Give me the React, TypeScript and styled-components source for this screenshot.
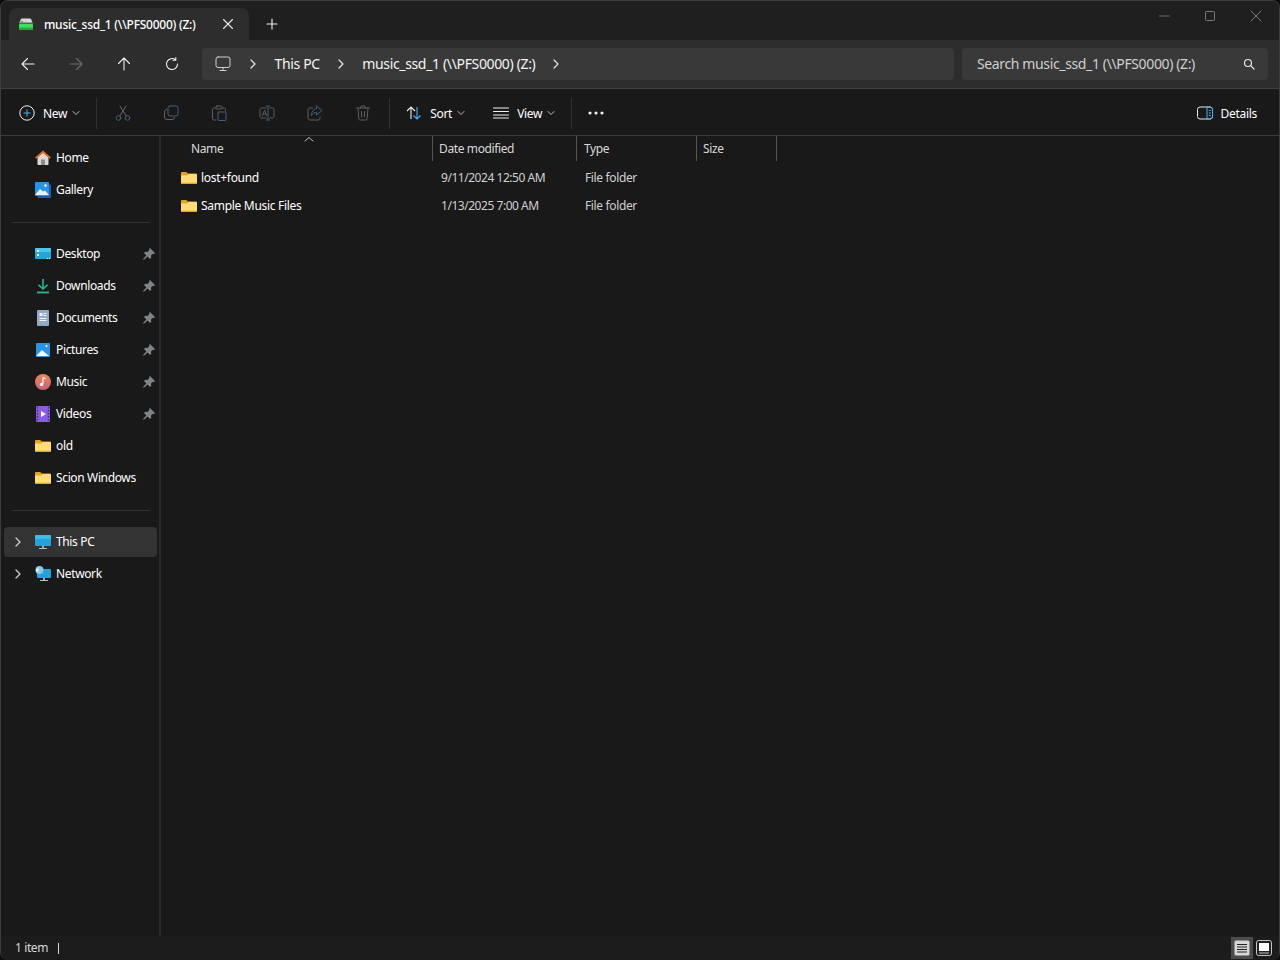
import * as React from "react";
import styled, { createGlobalStyle } from "styled-components";

const GlobalStyle = createGlobalStyle`
  html, body {
    margin: 0;
    padding: 0;
    height: 100%;
    background: #0c0c0c;
  }
  #root {
    height: 100%;
  }
`;

const Win = styled.div`
  box-sizing: border-box;
  width: 1280px;
  height: 960px;
  display: flex;
  flex-direction: column;
  overflow: hidden;
  border: 1px solid #3c3c3c;
  border-bottom: 0;
  border-radius: 8px;
  background: #191919;
  color: #fff;
  font-family: "Noto Sans", "Open Sans", sans-serif;
  font-size: 12px;
`;

const TabStrip = styled.div`
  height: 39px;
  flex-shrink: 0;
  display: flex;
  align-items: flex-end;
  padding-left: 8px;
  background: #1f1f1f;
`;

const Tab = styled.div`
  box-sizing: border-box;
  width: 240px;
  height: 32px;
  display: flex;
  align-items: center;
  padding: 0 15px 0 9px;
  background: #2d2d2d;
  border-radius: 8px 8px 0 0;
`;

const TabTitle = styled.span`
  flex: 1;
  margin-left: 10px;
  font-size: 12px;
  font-weight: 500;
  letter-spacing: -0.25px;
  white-space: nowrap;
`;

const NewTab = styled.div`
  width: 46px;
  height: 32px;
  display: flex;
  align-items: center;
  justify-content: center;
`;

const Spring = styled.div`
  flex: 1;
`;

const Caption = styled.div`
  align-self: flex-start;
  width: 46px;
  height: 29px;
  display: flex;
  align-items: center;
  justify-content: center;
`;

const NavBar = styled.div`
  box-sizing: border-box;
  height: 49px;
  flex-shrink: 0;
  display: flex;
  align-items: center;
  padding: 0 11px 0 3px;
  background: #2d2d2d;
  border-bottom: 1px solid #3f3f3f;
`;

const NavButton = styled.div`
  width: 48px;
  height: 32px;
  display: flex;
  align-items: center;
  justify-content: center;
`;

const AddressBar = styled.div`
  flex: 1;
  height: 32px;
  margin-left: 6px;
  display: flex;
  align-items: center;
  padding-left: 13px;
  background: #393939;
  border-radius: 4px;
  font-size: 14px;
  letter-spacing: -0.35px;
  color: #f4f4f4;
`;

const Crumb = styled.span`
  white-space: nowrap;
  margin: 0 15px 0 15.5px;
  padding-bottom: 2px;
`;

const ChevronSlot = styled.span<{ $left: number }>`
  display: flex;
  margin-left: ${(p) => p.$left}px;
`;

const SearchBox = styled.div`
  box-sizing: border-box;
  width: 306px;
  height: 32px;
  margin-left: 8px;
  display: flex;
  align-items: center;
  justify-content: space-between;
  padding: 0 13px 0 15px;
  background: #393939;
  border-radius: 4px;
  font-size: 14px;
  letter-spacing: -0.37px;
  color: #cfcfcf;
  white-space: nowrap;
`;

const SearchText = styled.span`
  padding-bottom: 2px;
`;

const Toolbar = styled.div`
  box-sizing: border-box;
  height: 47px;
  flex-shrink: 0;
  display: flex;
  align-items: center;
  padding: 2px 0 0 18px;
  background: #191919;
  border-bottom: 1px solid #3a3a3a;
`;

const ToolText = styled.span`
  margin: 0 5px 0 8px;
  font-size: 12px;
  letter-spacing: -0.3px;
`;

const ToolGroup = styled.div`
  display: flex;
  align-items: center;
`;

const GroupGap = styled.div`
  width: 28px;
`;

const ToolSep = styled.div<{ $left: number; $right: number }>`
  width: 1px;
  height: 31px;
  margin: 0 ${(p) => p.$right}px 0 ${(p) => p.$left}px;
  background: #303030;
`;

const IconCell = styled.div`
  width: 48px;
  display: flex;
  justify-content: center;
`;

const Details = styled.div`
  display: flex;
  align-items: center;
  margin-right: 22px;
  font-size: 12px;
  letter-spacing: -0.3px;
  span {
    margin-left: 8px;
  }
`;

const Body = styled.div`
  flex: 1;
  min-height: 0;
  display: flex;
`;

const Sidebar = styled.nav`
  box-sizing: border-box;
  width: 158px;
  flex-shrink: 0;
  display: flex;
  flex-direction: column;
  padding: 6px 0 0 3px;
`;

const SideRow = styled.div<{ $active?: boolean }>`
  box-sizing: border-box;
  width: 153px;
  height: 30px;
  margin: 1px 0;
  display: flex;
  align-items: center;
  padding-left: 6px;
  border-radius: 4px;
  background: ${(p) => (p.$active ? "#333333" : "transparent")};
  letter-spacing: -0.36px;
  color: #fff;
`;

const Expander = styled.span`
  width: 25px;
  flex-shrink: 0;
  display: flex;
  padding-left: 2px;
  box-sizing: border-box;
`;

const SideIcon = styled.span`
  width: 16px;
  height: 16px;
  flex-shrink: 0;
  display: flex;
  margin-right: 5px;
`;

const SideLabel = styled.span`
  flex: 1;
  padding-bottom: 2px;
  white-space: nowrap;
`;

const PinSlot = styled.span`
  display: flex;
  margin-right: 2px;
`;

const SideDivider = styled.div`
  width: 138px;
  height: 1px;
  flex-shrink: 0;
  margin: 16px 0 15px 8px;
  background: #333333;
`;

const Splitter = styled.div`
  width: 2px;
  flex-shrink: 0;
  background: #2b2b2b;
`;

const Content = styled.main`
  flex: 1;
  min-width: 0;
`;

const HeaderRow = styled.div`
  position: relative;
  display: grid;
  grid-template-columns: 272px 144px 120px 80px;
  height: 25px;
  margin-bottom: 3px;
  color: #d8d8d8;
`;

const HeaderCell = styled.div<{ $pad: number }>`
  box-sizing: border-box;
  height: 25px;
  line-height: 25px;
  padding-left: ${(p) => p.$pad}px;
  border-right: 1px solid #555;
  letter-spacing: -0.38px;
`;

const SortCaret = styled.span`
  position: absolute;
  left: 143px;
  top: 0;
  display: flex;
`;

const FileRow = styled.div`
  display: grid;
  grid-template-columns: 272px 144px 120px 80px;
  height: 28px;
  align-items: center;
`;

const NameCell = styled.div`
  display: flex;
  align-items: center;
  padding-left: 20px;
  letter-spacing: -0.3px;
  white-space: nowrap;
  svg {
    margin-right: 4px;
  }
  span {
    padding-bottom: 2px;
  }
`;

const InfoCell = styled.div<{ $spacing: number }>`
  padding: 0 0 2px 8px;
  color: #d0d0d0;
  letter-spacing: ${(p) => p.$spacing}px;
  white-space: nowrap;
`;

const StatusBar = styled.div`
  height: 24px;
  flex-shrink: 0;
  display: flex;
  align-items: center;
  padding-left: 14px;
  background: #1c1c1c;
  color: #d8d8d8;
  letter-spacing: -0.4px;
`;

const StatusText = styled.span`
  padding-bottom: 2px;
`;

const StatusSep = styled.div`
  width: 1px;
  height: 11px;
  margin-left: 10px;
  background: #d8d8d8;
`;

const ViewToggle = styled.div<{ $on?: boolean }>`
  width: 22px;
  height: 22px;
  display: flex;
  align-items: center;
  justify-content: center;
  background: ${(p) => (p.$on ? "#4b4b4b" : "transparent")};
`;

const ViewToggles = styled.div`
  display: flex;
  align-items: center;
  margin-right: 4px;
`;

type SvgProps = React.SVGProps<SVGSVGElement>;

const Line = ({ children, size = 16, ...rest }: SvgProps & { size?: number }) => (
  <svg width={size} height={size} viewBox="0 0 16 16" fill="none" stroke="currentColor" strokeLinecap="round" strokeLinejoin="round" {...rest}>
    {children}
  </svg>
);

const Chevron = ({ color = "#e0e0e0" }: { color?: string }) => (
  <Line stroke={color} strokeWidth={1.3} size={12} viewBox="0 0 12 12">
    <path d="M4 2l4 4-4 4" />
  </Line>
);

const Down = () => (
  <Line stroke="#bdbdbd" strokeWidth={1} size={8} viewBox="0 0 8 8">
    <path d="M1 2.500l3 3 3-3" />
  </Line>
);

const DriveIcon = () => (
  <svg width="16" height="16" viewBox="0 0 16 16">
    <path d="M4 2.500h8c.6 0 1 .3 1.200.8L15 8H1l1.800-4.700c.2-.5.600-.8 1.200-.8z" fill="#d8d8d8" />
    <path d="M1.500 6.500h13L15 8H1z" fill="#5c5c5c" />
    <rect x="1" y="8" width="14" height="6" rx="1" fill="#45dc60" />
    <rect x="1" y="11.500" width="14" height="2.500" rx="1" fill="#23a83d" />
    <rect x="3" y="5" width="2" height="1" fill="#2fb34a" />
  </svg>
);

const FolderIcon = () => (
  <svg width="16" height="16" viewBox="0 0 16 16">
    <path d="M0 3.200C0 2.500.5 2 1.200 2h4l1.600 1.500h8c.7 0 1.200.5 1.200 1.200v1H0z" fill="#e8a317" />
    <path d="M0 5.200h6.200l1.600-1.200h7c.7 0 1.200.5 1.200 1.200v7.600c0 .7-.5 1.200-1.200 1.200H1.200C.5 14 0 13.500 0 12.800z" fill="#ffdc78" />
    <path d="M0 12.800h16c0 .7-.5 1.200-1.200 1.200H1.200C.5 14 0 13.500 0 12.800z" fill="#e8a317" />
  </svg>
);

const PinIcon = () => (
  <svg width="12" height="12" viewBox="0 0 12 12">
    <path d="M7 0l5 5-1.100 1-1-.3-1.900 1.900.2 2.200L7 11 4.500 8.500 1 11.800 0 11l3.400-3.500L1 5l1.200-1.200 2.200.2L6.300 2.100 6 1z" fill="#7f8488" />
  </svg>
);

const HomeIcon = () => (
  <svg width="16" height="16" viewBox="0 0 16 16">
    <path d="M2.500 7L8 2.500 13.500 7v7.300c0 .5-.3.700-.7.700H3.200c-.4 0-.7-.2-.7-.7z" fill="#dcd8d5" />
    <rect x="6" y="9.500" width="4" height="5.500" fill="#8f8a87" />
    <path d="M8 .5L0 7.500l1.200 1.300L8 2.900l6.800 5.900L16 7.500z" fill="#e0691d" />
  </svg>
);

const GalleryIcon = () => (
  <svg width="16" height="16" viewBox="0 0 16 16">
    <rect x="2.500" y="2.500" width="13.500" height="13.500" rx="1" fill="#1a5fb0" />
    <rect x="0" y="0" width="14" height="14" rx="1" fill="#2a93e4" />
    <path d="M0 13l5-6 3 2.500 2-1 4 4.500z" fill="#eaf4fc" />
    <circle cx="10.500" cy="3.500" r="1.200" fill="#fff" />
  </svg>
);

const DesktopIcon = () => (
  <svg width="16" height="16" viewBox="0 0 16 16">
    <rect x="0" y="2" width="16" height="11" rx="1" fill="#25a5dc" />
    <rect x="0" y="2" width="16" height="4" rx="1" fill="#4cc6ef" />
    <rect x="2" y="4" width="2" height="2" fill="#eaf8fd" />
    <rect x="2" y="8" width="2" height="2" fill="#eaf8fd" />
    <rect x="12" y="12" width="1" height="1" fill="#eaf8fd" />
    <rect x="14" y="12" width="1" height="1" fill="#eaf8fd" />
  </svg>
);

const DownloadIcon = () => (
  <svg width="16" height="16" viewBox="0 0 16 16" fill="none" stroke="#25b890" strokeWidth="1.600">
    <path d="M8 1v10M3.500 6.800L8 11l4.500-4.200" />
    <path d="M2 14.500h12" strokeWidth="1.800" />
  </svg>
);

const DocumentIcon = () => (
  <svg width="16" height="16" viewBox="0 0 16 16">
    <rect x="2" y="0" width="12" height="16" rx="1" fill="#92a8c4" />
    <rect x="4.500" y="3" width="3" height="3" fill="#f2f5f9" />
    <path d="M8.500 3.500h3M8.500 5.500h3M4.500 8.500h7M4.500 10.500h7" stroke="#f2f5f9" strokeWidth="1" fill="none" />
  </svg>
);

const PicturesIcon = () => (
  <svg width="16" height="16" viewBox="0 0 16 16">
    <rect x="1" y="1" width="14" height="14" rx="1" fill="#2a93e4" />
    <path d="M1 14l6-6 7 6z" fill="#f0f7fc" />
    <circle cx="11.500" cy="4" r="1" fill="#fff" />
  </svg>
);

const MusicIcon = () => (
  <svg width="16" height="16" viewBox="0 0 16 16">
    <defs>
      <linearGradient id="mus" x1="0" y1="0" x2="0" y2="1">
        <stop offset="0" stopColor="#e88a55" />
        <stop offset="1" stopColor="#c9607a" />
      </linearGradient>
    </defs>
    <circle cx="8" cy="8" r="8" fill="url(#mus)" />
    <path d="M8 3.500v6.300" stroke="#fff" strokeWidth="1.200" />
    <path d="M8 3.500l2.500 1.200" stroke="#fff" strokeWidth="1.200" />
    <circle cx="6.500" cy="10.500" r="1.700" fill="#fff" />
  </svg>
);

const VideoIcon = () => (
  <svg width="16" height="16" viewBox="0 0 16 16">
    <rect x="1" y="0" width="14" height="16" rx="1" fill="#8a5ce0" />
    <path d="M2.500 1v14M13.500 1v14" stroke="#3f2a80" strokeWidth="1.400" strokeDasharray="1.500 1.500" />
    <path d="M6 5l5 3-5 3z" fill="#fff" />
  </svg>
);

const ThisPcIcon = () => (
  <svg width="16" height="16" viewBox="0 0 16 16">
    <rect x="0" y="1" width="16" height="11" rx="1" fill="#22a3dc" />
    <rect x="0" y="1" width="16" height="4" rx="1" fill="#38bfe8" />
    <rect x="7" y="12" width="2" height="2" fill="#a8a8a8" />
    <rect x="4" y="14" width="8" height="1" fill="#bdbdbd" />
  </svg>
);

const NetworkIcon = () => (
  <svg width="16" height="16" viewBox="0 0 16 16">
    <rect x="2" y="3" width="14" height="9" rx="1" fill="#22a3dc" />
    <rect x="8" y="12" width="2" height="2" fill="#a8a8a8" />
    <rect x="5" y="14" width="8" height="1" fill="#bdbdbd" />
    <circle cx="4.500" cy="4" r="4" fill="#8fc7ec" />
    <path d="M1 3c2-1 3 0 3 1s-2 1-2 3z" fill="#e4f2fb" />
  </svg>
);

const muted = { stroke: "#3d6178", strokeWidth: 1 };
const dim = { stroke: "#5f5f5f", strokeWidth: 1 };

const quickItems = [
  { label: "Desktop", icon: <DesktopIcon />, pin: true },
  { label: "Downloads", icon: <DownloadIcon />, pin: true },
  { label: "Documents", icon: <DocumentIcon />, pin: true },
  { label: "Pictures", icon: <PicturesIcon />, pin: true },
  { label: "Music", icon: <MusicIcon />, pin: true },
  { label: "Videos", icon: <VideoIcon />, pin: true },
  { label: "old", icon: <FolderIcon /> },
  { label: "Scion Windows", icon: <FolderIcon /> },
];

const files = [
  { name: "lost+found", date: "9/11/2024 12:50 AM" },
  { name: "Sample Music Files", date: "1/13/2025 7:00 AM" },
];

export default function App() {
  return (
    <>
      <GlobalStyle />
      <Win>
        <TabStrip>
          <Tab>
            <DriveIcon />
            <TabTitle>music_ssd_1 (\\PFS0000) (Z:)</TabTitle>
            <Line stroke="#e8e8e8" strokeWidth={1.1} size={12} viewBox="0 0 12 12">
              <path d="M1.500 1.500l9 9M10.500 1.500l-9 9" />
            </Line>
          </Tab>
          <NewTab>
            <Line stroke="#f0f0f0" strokeWidth={1.1} size={12} viewBox="0 0 12 12">
              <path d="M6 1v10M1 6h10" />
            </Line>
          </NewTab>
          <Spring />
          <Caption>
            <Line stroke="#6a6a6a" size={12} viewBox="0 0 12 12"><path d="M1.500 6h10" /></Line>
          </Caption>
          <Caption>
            <Line stroke="#7a7a7a" size={12} viewBox="0 0 12 12"><rect x="1.500" y="1.500" width="9" height="9" rx="1" /></Line>
          </Caption>
          <Caption>
            <Line stroke="#7a7a7a" size={12} viewBox="0 0 12 12"><path d="M1 1l10 10M11 1L1 11" /></Line>
          </Caption>
        </TabStrip>

        <NavBar>
          <NavButton>
            <Line stroke="#f0f0f0" strokeWidth={1.1}><path d="M14 8H2M7.500 2.500L2 8l5.500 5.500" /></Line>
          </NavButton>
          <NavButton>
            <Line stroke="#6e6e6e" strokeWidth={1.1}><path d="M2 8h12M8.500 2.500L14 8l-5.500 5.500" /></Line>
          </NavButton>
          <NavButton>
            <Line stroke="#f0f0f0" strokeWidth={1.1}><path d="M8 14V2M2.500 7.500L8 2l5.500 5.500" /></Line>
          </NavButton>
          <NavButton>
            <Line stroke="#f0f0f0" strokeWidth={1.1}><path d="M13.500 8A5.500 5.500 0 1 1 11.500 3.800M11.800 1.500v2.800H9" /></Line>
          </NavButton>
          <AddressBar>
            <Line stroke="#cfcfcf" strokeWidth={1}>
              <rect x="1" y="1" width="14" height="10.500" rx="2" />
              <path d="M8 11.500V14M5 14.500h6" />
            </Line>
            <ChevronSlot $left={16}><Chevron /></ChevronSlot>
            <Crumb>This PC</Crumb>
            <Chevron />
            <Crumb>music_ssd_1 (\\PFS0000) (Z:)</Crumb>
            <Chevron />
          </AddressBar>
          <SearchBox>
            <SearchText>Search music_ssd_1 (\\PFS0000) (Z:)</SearchText>
            <Line stroke="#e8e8e8" strokeWidth={1.2} size={12} viewBox="0 0 12 12">
              <circle cx="5" cy="5" r="3.500" />
              <path d="M7.700 7.700L11 11" />
            </Line>
          </SearchBox>
        </NavBar>

        <Toolbar>
          <ToolGroup>
            <svg width="16" height="16" viewBox="0 0 16 16" fill="none">
              <circle cx="8" cy="8" r="7.200" stroke="#f0f0f0" />
              <path d="M8 4.500v7M4.500 8h7" stroke="#3fb4f0" />
            </svg>
            <ToolText>New</ToolText>
            <Down />
          </ToolGroup>
          <ToolSep $left={16} $right={2} />
          <IconCell>
            <Line {...muted}>
              <circle cx="3.500" cy="13" r="2.300" /><circle cx="12.500" cy="13" r="2.300" />
              <path d="M4.800 11L11 1M11.200 11L5 1" stroke="#6a6a6a" />
            </Line>
          </IconCell>
          <IconCell>
            <Line {...dim}>
              <rect x="5" y="1" width="10" height="10" rx="2" stroke="#3d6178" />
              <path d="M4 4.500C2 4.500 1.500 5.500 1.500 7v5c0 1.500 1 2.500 2.500 2.500h5c1.500 0 2.500-.5 2.500-2" />
            </Line>
          </IconCell>
          <IconCell>
            <Line {...dim}>
              <path d="M5 3H3c-1 0-1.500.5-1.500 1.500v9c0 1 .5 1.500 1.500 1.500h2M11 3h2c1 0 1.500.5 1.500 1.500V6" />
              <rect x="5" y="1" width="6" height="3" rx="1" />
              <rect x="7" y="7" width="8" height="8.500" rx="1" stroke="#3d6178" />
            </Line>
          </IconCell>
          <IconCell>
            <Line {...dim}>
              <path d="M7 3H2.500C1.500 3 1 3.500 1 4.500v7c0 1 .5 1.500 1.500 1.500H7M11 3h2.500c1 0 1.500.5 1.500 1.500v7c0 1-.5 1.500-1.500 1.500H11" />
              <path d="M9 1v14M7.500 1h3M7.500 15h3" stroke="#3d6178" />
              <path d="M3.500 10.500L5.500 5l2 5.500M4.300 9h2.400" />
            </Line>
          </IconCell>
          <IconCell>
            <Line {...dim}>
              <path d="M5.500 3H3C1.800 3 1 3.800 1 5v8c0 1.200.8 2 2 2h8c1.200 0 2-.8 2-2v-1" />
              <path d="M9.500 1l5.500 4.500-5.500 4.500V7.500C7 7.500 5.500 8.500 4.500 10.500c0-4 2-6.500 5-7z" stroke="#3d6178" />
            </Line>
          </IconCell>
          <IconCell>
            <Line {...dim}>
              <path d="M1.500 3h13M5.500 3V2.200c0-.7.5-1.200 1.200-1.200h2.600c.7 0 1.200.5 1.200 1.200V3" />
              <path d="M3 3l.8 10.800c.1.800.6 1.200 1.300 1.200h5.800c.7 0 1.200-.4 1.300-1.200L13 3M6.500 6.500v5.500M9.500 6.500v5.500" />
            </Line>
          </IconCell>
          <ToolSep $left={2} $right={16} />
          <ToolGroup>
            <svg width="16" height="16" viewBox="0 0 16 16" fill="none" strokeWidth="1.100">
              <path d="M5 14V2M1 6l4-4 4 4" stroke="#f0f0f0" />
              <path d="M11 2v12M7.500 10.500L11 14l3.500-3.500" stroke="#3fb4f0" />
            </svg>
            <ToolText>Sort</ToolText>
            <Down />
          </ToolGroup>
          <GroupGap />
          <ToolGroup>
            <Line stroke="#f0f0f0" strokeWidth={1}>
              <path d="M.5 3h15M.5 6.500h15M.5 10h15M.5 13h15" />
            </Line>
            <ToolText>View</ToolText>
            <Down />
          </ToolGroup>
          <ToolSep $left={16} $right={16} />
          <svg width="16" height="16" viewBox="0 0 16 16" fill="#f0f0f0">
            <circle cx="2" cy="8" r="1.600" /><circle cx="8" cy="8" r="1.600" /><circle cx="14" cy="8" r="1.600" />
          </svg>
          <Spring />
          <Details>
            <svg width="16" height="14" viewBox="0 0 16 14" fill="none">
              <rect x=".5" y="1" width="15" height="12" rx="2.500" stroke="#e8e8e8" />
              <path d="M10 1h3c1.500 0 2.500 1 2.500 2.500v7c0 1.500-1 2.500-2.500 2.500h-3z" stroke="#3fb4f0" />
              <path d="M11.800 4.500h2M11.800 7h2M11.800 9.500h2" stroke="#3fb4f0" />
            </svg>
            <span>Details</span>
          </Details>
        </Toolbar>

        <Body>
          <Sidebar>
            <SideRow><Expander /><SideIcon><HomeIcon /></SideIcon><SideLabel>Home</SideLabel></SideRow>
            <SideRow><Expander /><SideIcon><GalleryIcon /></SideIcon><SideLabel>Gallery</SideLabel></SideRow>
            <SideDivider />
            {quickItems.map((item) => (
              <SideRow key={item.label}>
                <Expander />
                <SideIcon>{item.icon}</SideIcon>
                <SideLabel>{item.label}</SideLabel>
                {item.pin && <PinSlot><PinIcon /></PinSlot>}
              </SideRow>
            ))}
            <SideDivider />
            <SideRow $active>
              <Expander><Chevron color="#cfcfcf" /></Expander>
              <SideIcon><ThisPcIcon /></SideIcon>
              <SideLabel>This PC</SideLabel>
            </SideRow>
            <SideRow>
              <Expander><Chevron color="#cfcfcf" /></Expander>
              <SideIcon><NetworkIcon /></SideIcon>
              <SideLabel>Network</SideLabel>
            </SideRow>
          </Sidebar>
          <Splitter />
          <Content>
            <HeaderRow>
              <HeaderCell $pad={30}>Name</HeaderCell>
              <HeaderCell $pad={6}>Date modified</HeaderCell>
              <HeaderCell $pad={7}>Type</HeaderCell>
              <HeaderCell $pad={6}>Size</HeaderCell>
              <SortCaret>
                <Line stroke="#bdbdbd" strokeWidth={1} size={10} viewBox="0 0 10 10"><path d="M1 5l4-3.500L9 5" /></Line>
              </SortCaret>
            </HeaderRow>
            {files.map((f) => (
              <FileRow key={f.name}>
                <NameCell><FolderIcon /><span>{f.name}</span></NameCell>
                <InfoCell $spacing={-0.46}>{f.date}</InfoCell>
                <InfoCell $spacing={-0.36}>File folder</InfoCell>
                <InfoCell $spacing={-0.36} />
              </FileRow>
            ))}
          </Content>
        </Body>

        <StatusBar>
          <StatusText>1 item</StatusText>
          <StatusSep />
          <Spring />
          <ViewToggles>
            <ViewToggle $on>
              <svg width="16" height="16" viewBox="0 0 16 16">
                <rect x=".5" y=".5" width="15" height="15" rx="1.500" fill="#d6d6d6" />
                <path d="M3 4.500h10M3 7h10M3 9.500h10M3 12h10" stroke="#222" strokeWidth="1.100" />
              </svg>
            </ViewToggle>
            <ViewToggle>
              <svg width="16" height="16" viewBox="0 0 16 16">
                <rect x=".5" y=".5" width="15" height="15" rx="2" fill="#222" stroke="#c4c4c4" />
                <rect x="3" y="3" width="10" height="8" fill="#fff" />
                <rect x="3" y="12.500" width="10" height="1" fill="#c4c4c4" />
              </svg>
            </ViewToggle>
          </ViewToggles>
        </StatusBar>
      </Win>
    </>
  );
}
